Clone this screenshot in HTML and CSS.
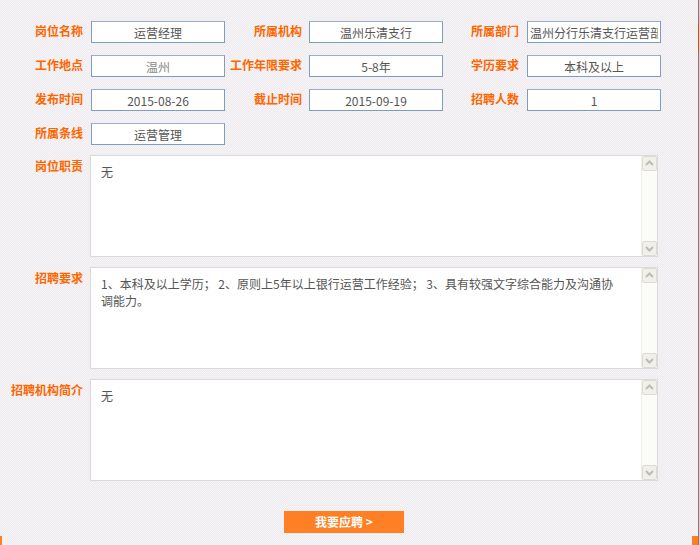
FILE: index.html
```html
<!DOCTYPE html>
<html lang="zh-CN">
<head>
<meta charset="utf-8">
<title>岗位详情</title>
<link rel="stylesheet" href="styles.css">
</head>
<body>
<div class="page">
  <div class="info-grid">
    <div class="lbl l1">岗位名称</div><input class="field" readonly value="运营经理">
    <div class="lbl l2">所属机构</div><input class="field" readonly value="温州乐清支行">
    <div class="lbl l3">所属部门</div><input class="field" readonly value="温州分行乐清支行运营部">

    <div class="lbl l1">工作地点</div><input class="field light" readonly value="温州">
    <div class="lbl l2">工作年限要求</div><input class="field" readonly value="5-8年">
    <div class="lbl l3">学历要求</div><input class="field" readonly value="本科及以上">

    <div class="lbl l1">发布时间</div><input class="field" readonly value="2015-08-26">
    <div class="lbl l2">截止时间</div><input class="field" readonly value="2015-09-19">
    <div class="lbl l3">招聘人数</div><input class="field" readonly value="1">

    <div class="lbl l1">所属条线</div><input class="field" readonly value="运营管理">
  </div>

  <div class="text-rows">
    <div class="text-row">
      <div class="tlbl">岗位职责</div>
      <div class="tbox">
        <div class="tcontent">无</div>
        <div class="sbar">
          <div class="sbtn"><svg width="13" height="13" viewBox="0 0 13 13"><path d="M3 8 L6.5 4.5 L10 8" fill="none" stroke="#bdbdb4" stroke-width="2"/></svg></div>
          <div class="strack"></div>
          <div class="sbtn"><svg width="13" height="13" viewBox="0 0 13 13"><path d="M3 5 L6.5 8.5 L10 5" fill="none" stroke="#bdbdb4" stroke-width="2"/></svg></div>
        </div>
      </div>
    </div>
    <div class="text-row">
      <div class="tlbl">招聘要求</div>
      <div class="tbox">
        <div class="tcontent">1、本科及以上学历； 2、原则上5年以上银行运营工作经验； 3、具有较强文字综合能力及沟通协调能力。</div>
        <div class="sbar">
          <div class="sbtn"><svg width="13" height="13" viewBox="0 0 13 13"><path d="M3 8 L6.5 4.5 L10 8" fill="none" stroke="#bdbdb4" stroke-width="2"/></svg></div>
          <div class="strack"></div>
          <div class="sbtn"><svg width="13" height="13" viewBox="0 0 13 13"><path d="M3 5 L6.5 8.5 L10 5" fill="none" stroke="#bdbdb4" stroke-width="2"/></svg></div>
        </div>
      </div>
    </div>
    <div class="text-row">
      <div class="tlbl">招聘机构简介</div>
      <div class="tbox">
        <div class="tcontent">无</div>
        <div class="sbar">
          <div class="sbtn"><svg width="13" height="13" viewBox="0 0 13 13"><path d="M3 8 L6.5 4.5 L10 8" fill="none" stroke="#bdbdb4" stroke-width="2"/></svg></div>
          <div class="strack"></div>
          <div class="sbtn"><svg width="13" height="13" viewBox="0 0 13 13"><path d="M3 5 L6.5 8.5 L10 5" fill="none" stroke="#bdbdb4" stroke-width="2"/></svg></div>
        </div>
      </div>
    </div>
  </div>

  <div class="actions">
    <button class="apply">我要应聘 &gt;</button>
  </div>

  <span class="corner corner-left"></span>
  <span class="corner corner-right"></span>
  <span class="edge-mark"></span>
</div>
</body>
</html>
```

FILE: styles.css
```css
* { box-sizing: border-box; }

html, body {
  margin: 0;
  padding: 0;
}

body {
  width: 699px;
  height: 545px;
  overflow: hidden;
  font-family: "Noto Sans CJK SC", "Noto Sans", sans-serif;
  font-size: 12px;
  background-color: #f2f0f2;
  background-image: conic-gradient(#eeecee 25%, #f5f3f5 0 50%, #eeecee 0 75%, #f5f3f5 0);
  background-size: 2px 2px;
}

.page {
  position: relative;
  width: 699px;
  height: 545px;
  padding-top: 21px;
  border-right: 1px solid #7c7c7c;
}

.info-grid {
  display: grid;
  grid-template-columns: 91px 134px 84px 134px 84px 134px;
  grid-auto-rows: 22px;
  row-gap: 12px;
}

.lbl {
  text-align: right;
  line-height: 20px;
  color: #ff6600;
  font-weight: bold;
  white-space: nowrap;
}
.l1 { padding-right: 8px; }
.l2 { padding-right: 7px; }
.l3 { padding-right: 8px; }

.field {
  width: 134px;
  height: 22px;
  margin: 0;
  padding: 0 2px;
  border: 1px solid #7f9db9;
  border-top-color: #9bb0c6;
  background: #fff;
  font-family: "Noto Sans CJK SC", "Noto Sans", sans-serif;
  font-size: 12px;
  color: #555;
  text-align: center;
  outline: none;
}
.field.light { color: #888; }

.text-rows {
  display: flex;
  flex-direction: column;
  gap: 10px;
  margin-top: 10px;
}

.text-row {
  display: flex;
  gap: 7px;
}

.tlbl {
  width: 83px;
  padding-top: 3px;
  text-align: right;
  line-height: 16px;
  color: #ff6600;
  font-weight: bold;
  white-space: nowrap;
}

.tbox {
  display: flex;
  width: 568px;
  height: 102px;
  border: 1px solid #dadada;
  background: #fff;
}

.tcontent {
  flex: 1;
  padding: 7px 22px 0 10px;
  line-height: 17px;
  color: #555;
}

.sbar {
  display: flex;
  flex-direction: column;
  width: 16px;
  background: #fbfbf8;
  border-left: 1px solid #f0efe8;
}

.sbtn {
  display: flex;
  align-items: center;
  justify-content: center;
  height: 15px;
  background: #f1f1ea;
  border: 1px solid #dedcd2;
  border-radius: 2px;
}

.strack { flex: 1; }

.actions {
  margin-top: 30px;
  padding-left: 284px;
}

.apply {
  width: 120px;
  height: 22px;
  margin: 0;
  padding: 0;
  border: none;
  background: #ff7f24;
  color: #fff;
  font-family: "Noto Sans CJK SC", "Noto Sans", sans-serif;
  font-size: 12px;
  font-weight: bold;
  line-height: 22px;
  cursor: pointer;
}

.corner {
  position: absolute;
  bottom: 0;
  height: 9px;
  background: #ff7f24;
}
.corner-left { left: 0; width: 2px; }
.corner-right { right: 0; width: 6px; }

.edge-mark {
  position: absolute;
  right: -1px;
  top: 23px;
  width: 1px;
  height: 28px;
  background: #b4610f;
}
```
